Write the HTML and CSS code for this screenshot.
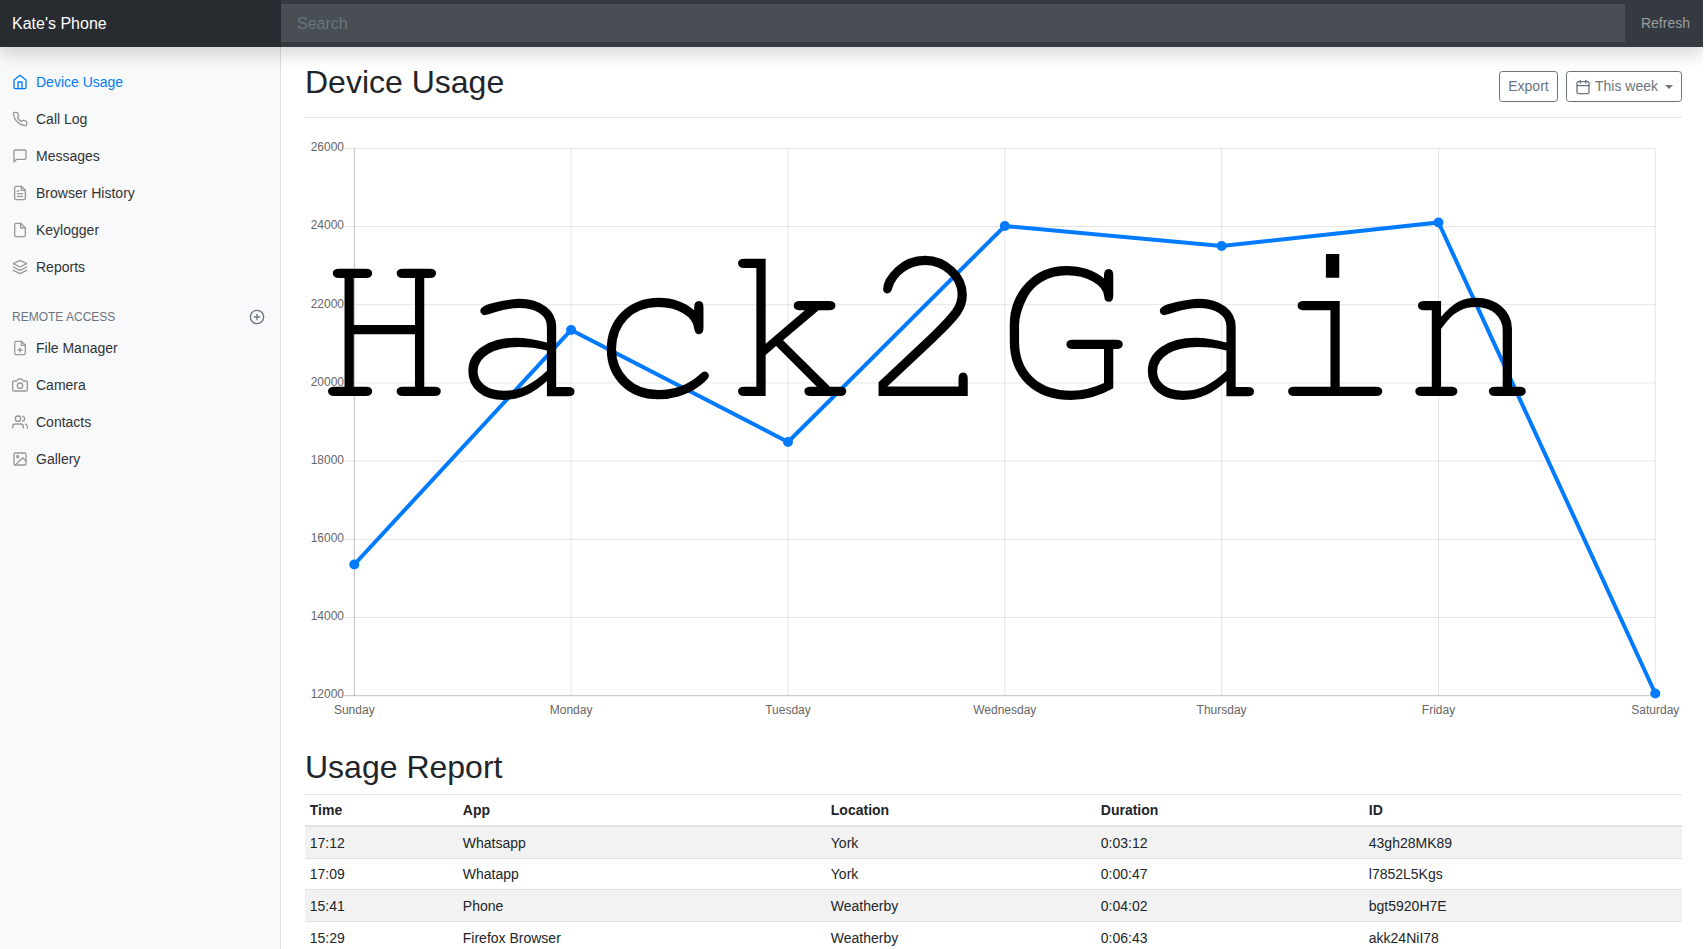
FILE: index.html
```html
<!DOCTYPE html>
<html lang="en">
<head>
<meta charset="utf-8">
<title>Kate's Phone</title>
<link rel="stylesheet" href="styles.css">
</head>
<body>
<svg class="sprite" width="0" height="0" aria-hidden="true">
  <symbol id="i-home" viewBox="0 0 24 24"><path d="M3 9l9-7 9 7v11a2 2 0 0 1-2 2H5a2 2 0 0 1-2-2z"/><polyline points="9 22 9 12 15 12 15 22"/></symbol>
  <symbol id="i-phone" viewBox="0 0 24 24"><path d="M22 16.92v3a2 2 0 0 1-2.18 2 19.79 19.79 0 0 1-8.63-3.07 19.5 19.5 0 0 1-6-6 19.79 19.79 0 0 1-3.07-8.67A2 2 0 0 1 4.11 2h3a2 2 0 0 1 2 1.72 12.84 12.84 0 0 0 .7 2.81 2 2 0 0 1-.45 2.11L8.09 9.91a16 16 0 0 0 6 6l1.27-1.27a2 2 0 0 1 2.11-.45 12.84 12.84 0 0 0 2.81.7A2 2 0 0 1 22 16.92z"/></symbol>
  <symbol id="i-message" viewBox="0 0 24 24"><path d="M21 15a2 2 0 0 1-2 2H7l-4 4V5a2 2 0 0 1 2-2h14a2 2 0 0 1 2 2z"/></symbol>
  <symbol id="i-file-text" viewBox="0 0 24 24"><path d="M14 2H6a2 2 0 0 0-2 2v16a2 2 0 0 0 2 2h12a2 2 0 0 0 2-2V8z"/><polyline points="14 2 14 8 20 8"/><line x1="16" y1="13" x2="8" y2="13"/><line x1="16" y1="17" x2="8" y2="17"/><polyline points="10 9 9 9 8 9"/></symbol>
  <symbol id="i-file" viewBox="0 0 24 24"><path d="M13 2H6a2 2 0 0 0-2 2v16a2 2 0 0 0 2 2h12a2 2 0 0 0 2-2V9z"/><polyline points="13 2 13 9 20 9"/></symbol>
  <symbol id="i-layers" viewBox="0 0 24 24"><polygon points="12 2 2 7 12 12 22 7 12 2"/><polyline points="2 17 12 22 22 17"/><polyline points="2 12 12 17 22 12"/></symbol>
  <symbol id="i-file-plus" viewBox="0 0 24 24"><path d="M14 2H6a2 2 0 0 0-2 2v16a2 2 0 0 0 2 2h12a2 2 0 0 0 2-2V8z"/><polyline points="14 2 14 8 20 8"/><line x1="12" y1="18" x2="12" y2="12"/><line x1="9" y1="15" x2="15" y2="15"/></symbol>
  <symbol id="i-camera" viewBox="0 0 24 24"><path d="M23 19a2 2 0 0 1-2 2H3a2 2 0 0 1-2-2V8a2 2 0 0 1 2-2h4l2-3h6l2 3h4a2 2 0 0 1 2 2z"/><circle cx="12" cy="13" r="4"/></symbol>
  <symbol id="i-users" viewBox="0 0 24 24"><path d="M17 21v-2a4 4 0 0 0-4-4H5a4 4 0 0 0-4 4v2"/><circle cx="9" cy="7" r="4"/><path d="M23 21v-2a4 4 0 0 0-3-3.87"/><path d="M16 3.13a4 4 0 0 1 0 7.75"/></symbol>
  <symbol id="i-image" viewBox="0 0 24 24"><rect x="3" y="3" width="18" height="18" rx="2" ry="2"/><circle cx="8.5" cy="8.5" r="1.5"/><polyline points="21 15 16 10 5 21"/></symbol>
  <symbol id="i-plus-circle" viewBox="0 0 24 24"><circle cx="12" cy="12" r="10"/><line x1="12" y1="8" x2="12" y2="16"/><line x1="8" y1="12" x2="16" y2="12"/></symbol>
  <symbol id="i-calendar" viewBox="0 0 24 24"><rect x="3" y="4" width="18" height="18" rx="2" ry="2"/><line x1="16" y1="2" x2="16" y2="6"/><line x1="8" y1="2" x2="8" y2="6"/><line x1="3" y1="10" x2="21" y2="10"/></symbol>
</svg>

<div class="app">
  <header class="navbar">
    <a class="brand">Kate's Phone</a>
    <input class="search" type="text" placeholder="Search">
    <a class="refresh">Refresh</a>
  </header>

  <nav class="sidebar">
    <ul class="nav">
      <li><a class="nav-link active"><svg class="icon"><use href="#i-home"/></svg>Device Usage</a></li>
      <li><a class="nav-link"><svg class="icon"><use href="#i-phone"/></svg>Call Log</a></li>
      <li><a class="nav-link"><svg class="icon"><use href="#i-message"/></svg>Messages</a></li>
      <li><a class="nav-link"><svg class="icon"><use href="#i-file-text"/></svg>Browser History</a></li>
      <li><a class="nav-link"><svg class="icon"><use href="#i-file"/></svg>Keylogger</a></li>
      <li><a class="nav-link"><svg class="icon"><use href="#i-layers"/></svg>Reports</a></li>
    </ul>
    <h6 class="sidebar-heading"><span>Remote Access</span><svg class="icon-plus"><use href="#i-plus-circle"/></svg></h6>
    <ul class="nav">
      <li><a class="nav-link"><svg class="icon"><use href="#i-file-plus"/></svg>File Manager</a></li>
      <li><a class="nav-link"><svg class="icon"><use href="#i-camera"/></svg>Camera</a></li>
      <li><a class="nav-link"><svg class="icon"><use href="#i-users"/></svg>Contacts</a></li>
      <li><a class="nav-link"><svg class="icon"><use href="#i-image"/></svg>Gallery</a></li>
    </ul>
  </nav>

  <main class="main">
    <div class="title-row">
      <h1 class="title">Device Usage</h1>
      <div class="toolbar">
        <button class="btn btn-export">Export</button>
        <button class="btn"><svg class="btn-icon"><use href="#i-calendar"/></svg>This week<span class="caret"></span></button>
      </div>
    </div>

    <svg class="chart" viewBox="0 0 1377 589.5" width="1377" height="589.5">
      <g class="grid">
        <line x1="39" y1="14.3" x2="1350.3" y2="14.3"/>
        <line x1="39" y1="92.5" x2="1350.3" y2="92.5"/>
        <line x1="39" y1="170.7" x2="1350.3" y2="170.7"/>
        <line x1="39" y1="248.9" x2="1350.3" y2="248.9"/>
        <line x1="39" y1="327.1" x2="1350.3" y2="327.1"/>
        <line x1="39" y1="405.3" x2="1350.3" y2="405.3"/>
        <line x1="39" y1="483.5" x2="1350.3" y2="483.5"/>
        <line x1="266.1" y1="14.3" x2="266.1" y2="561.7"/>
        <line x1="483" y1="14.3" x2="483" y2="561.7"/>
        <line x1="699.8" y1="14.3" x2="699.8" y2="561.7"/>
        <line x1="916.6" y1="14.3" x2="916.6" y2="561.7"/>
        <line x1="1133.5" y1="14.3" x2="1133.5" y2="561.7"/>
        <line x1="1350.3" y1="14.3" x2="1350.3" y2="561.7"/>
      </g>
      <g class="axis">
        <line x1="49.3" y1="14.3" x2="49.3" y2="561.7"/>
        <line x1="39" y1="561.7" x2="1350.3" y2="561.7"/>
      </g>
      <g class="ticks-y">
        <text x="39" y="17">26000</text>
        <text x="39" y="95">24000</text>
        <text x="39" y="174">22000</text>
        <text x="39" y="252">20000</text>
        <text x="39" y="330">18000</text>
        <text x="39" y="408">16000</text>
        <text x="39" y="486">14000</text>
        <text x="39" y="564">12000</text>
      </g>
      <g class="ticks-x">
        <text x="49.3" y="580">Sunday</text>
        <text x="266.1" y="580">Monday</text>
        <text x="483" y="580">Tuesday</text>
        <text x="699.8" y="580">Wednesday</text>
        <text x="916.6" y="580">Thursday</text>
        <text x="1133.5" y="580">Friday</text>
        <text x="1350.3" y="580">Saturday</text>
      </g>
      <polyline class="series" points="49.3,430.5 266.1,196 483,308 699.8,92 916.6,112 1133.5,88.5 1350.3,559.5"/>
      <g class="points">
        <circle cx="49.3" cy="430.5" r="5"/>
        <circle cx="266.1" cy="196" r="5"/>
        <circle cx="483" cy="308" r="5"/>
        <circle cx="699.8" cy="92" r="5"/>
        <circle cx="916.6" cy="112" r="5"/>
        <circle cx="1133.5" cy="88.5" r="5"/>
        <circle cx="1350.3" cy="559.5" r="5"/>
      </g>
    </svg>

    <h2 class="title report-title">Usage Report</h2>
    <table class="table">
      <colgroup>
        <col class="c-time"><col class="c-app"><col class="c-loc"><col class="c-dur"><col class="c-id">
      </colgroup>
      <thead>
        <tr><th>Time</th><th>App</th><th>Location</th><th>Duration</th><th>ID</th></tr>
      </thead>
      <tbody>
        <tr><td>17:12</td><td>Whatsapp</td><td>York</td><td>0:03:12</td><td>43gh28MK89</td></tr>
        <tr><td>17:09</td><td>Whatapp</td><td>York</td><td>0:00:47</td><td>l7852L5Kgs</td></tr>
        <tr><td>15:41</td><td>Phone</td><td>Weatherby</td><td>0:04:02</td><td>bgt5920H7E</td></tr>
        <tr><td>15:29</td><td>Firefox Browser</td><td>Weatherby</td><td>0:06:43</td><td>akk24NiI78</td></tr>
      </tbody>
    </table>
  </main>

  <div class="watermark">Hack2Gain</div>
</div>
</body>
</html>
```

FILE: styles.css
```css
* { box-sizing: border-box; }

html, body {
  margin: 0;
  height: 949px;
  overflow: hidden;
  background: #fff;
}

body {
  font-family: "Liberation Sans", Arial, sans-serif;
  font-size: 16px;
  line-height: 1.5;
  color: #212529;
}

.sprite { position: absolute; }

.app {
  position: relative;
  width: 1703px;
  height: 949px;
  display: grid;
  grid-template-columns: 281px 1fr;
  grid-template-rows: 47px 1fr;
  overflow: hidden;
}

.navbar {
  grid-column: 1 / 3;
  position: relative;
  z-index: 2;
  display: flex;
  align-items: stretch;
  background: #343a40;
  box-shadow: 0 8px 16px rgba(0, 0, 0, 0.15);
}

.brand {
  flex: 0 0 281px;
  padding: 12px 12px;
  background: #282c30;
  color: #fff;
  font-size: 16px;
  line-height: 24px;
}

.search {
  flex: 1;
  margin: 4px 0 5px;
  padding: 7px 16px 5px;
  border: 0;
  border-radius: 0;
  outline: 0;
  background: #484e53;
  color: #fff;
  font: 16px/24px "Liberation Sans", Arial, sans-serif;
}

.search::placeholder { color: #6c757d; opacity: 1; }

.refresh {
  padding: 11px 13px 11px 16px;
  color: rgba(255, 255, 255, 0.5);
  font-size: 14px;
  line-height: 24px;
}

.sidebar {
  padding-top: 17px;
  background: #f8f9fa;
  box-shadow: inset -1px 0 0 rgba(0, 0, 0, 0.1);
  font-size: 14px;
}

.nav {
  margin: 0;
  padding: 0;
  list-style: none;
}

.nav-link {
  display: flex;
  align-items: center;
  padding: 8px 12px;
  height: 37px;
  color: #333;
  font-weight: 400;
  line-height: 21px;
}

.nav-link.active { color: #007bff; }

.icon {
  width: 16px;
  height: 16px;
  margin-top: -2px;
  margin-right: 8px;
  flex: none;
  fill: none;
  stroke: #999;
  stroke-width: 2;
  stroke-linecap: round;
  stroke-linejoin: round;
}

.nav-link.active .icon { stroke: currentColor; }

.sidebar-heading {
  display: flex;
  align-items: center;
  justify-content: space-between;
  margin: 22px 0 4px;
  padding: 0 16px 0 12px;
  height: 18px;
  font-size: 12px;
  line-height: 18px;
  font-weight: 400;
  color: #6c757d;
  text-transform: uppercase;
}

.icon-plus {
  width: 16px;
  height: 16px;
  fill: none;
  stroke: #6c757d;
  stroke-width: 2;
  stroke-linecap: round;
  stroke-linejoin: round;
}

.main {
  padding: 0 21px 0 24px;
  overflow: hidden;
  min-width: 0;
}

.title-row {
  display: flex;
  justify-content: space-between;
  align-items: flex-start;
  padding: 16px 0 8px;
  margin-bottom: 16px;
  border-bottom: 1px solid #dee2e6;
}

.title {
  margin: 0 0 8px;
  font-size: 32px;
  font-weight: 500;
  line-height: 1.2;
}

.toolbar {
  display: flex;
  gap: 8px;
  margin-top: 8px;
}

.btn {
  display: inline-flex;
  align-items: center;
  height: 31px;
  padding: 4px 8px;
  border: 1px solid #6c757d;
  border-radius: 3.2px;
  background: transparent;
  color: #6c757d;
  font: 14px/21px "Liberation Sans", Arial, sans-serif;
}

.btn-export {
  width: 59px;
  justify-content: center;
}

.btn-icon {
  width: 16px;
  height: 16px;
  margin-right: 4px;
  fill: none;
  stroke: currentColor;
  stroke-width: 2;
  stroke-linecap: round;
  stroke-linejoin: round;
}

.caret {
  width: 0;
  height: 0;
  margin-left: 7px;
  border-top: 4.2px solid currentColor;
  border-left: 4.2px solid transparent;
  border-right: 4.2px solid transparent;
}

.chart {
  display: block;
  margin-bottom: 24px;
}

.grid line { stroke: rgba(0, 0, 0, 0.1); stroke-width: 1; }
.axis line { stroke: rgba(0, 0, 0, 0.25); stroke-width: 1; }

.ticks-y text,
.ticks-x text {
  font: 12px "Liberation Sans", Arial, sans-serif;
  fill: #666;
}

.ticks-y text { text-anchor: end; }
.ticks-x text { text-anchor: middle; }

.series {
  fill: none;
  stroke: #007bff;
  stroke-width: 4;
  stroke-linejoin: miter;
}

.points circle { fill: #007bff; }

.report-title { margin-bottom: 8px; }

.table {
  width: 100%;
  table-layout: fixed;
  border-collapse: collapse;
  font-size: 14px;
  line-height: 21.1px;
}

.c-time { width: 153px; }
.c-app { width: 368px; }
.c-loc { width: 270px; }
.c-dur { width: 268px; }

.table th,
.table td {
  padding: 5.8px 4.8px 3.8px;
  text-align: left;
  vertical-align: top;
  border-top: 1px solid #dee2e6;
}

.table th {
  padding-top: 4.8px;
  font-weight: 700;
  border-bottom: 2px solid #dee2e6;
}

.table tbody tr:nth-child(odd) { background: #f2f2f2; }

.watermark {
  position: absolute;
  left: 316px;
  top: 215px;
  font-family: "FreeMono", "TeX Gyre Cursor", "Liberation Mono", monospace;
  font-size: 226.5px;
  line-height: 1;
  color: #000;
  white-space: nowrap;
  pointer-events: none;
}
```
